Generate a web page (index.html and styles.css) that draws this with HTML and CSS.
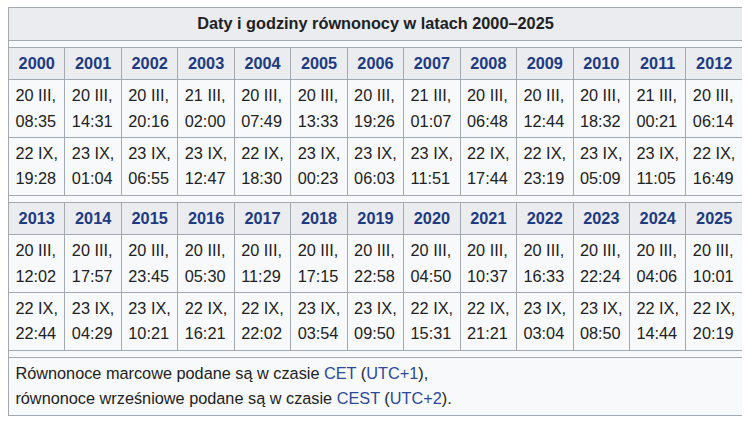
FILE: index.html
```html
<!DOCTYPE html>
<html lang="pl">
<head>
<meta charset="utf-8">
<title>Daty i godziny równonocy</title>
<link rel="stylesheet" href="styles.css">
</head>
<body>
<table class="wikitable">
<tbody>
<tr><th class="title" colspan="13">Daty i godziny równonocy w latach 2000–2025</th></tr>
<tr class="sep"><td colspan="13"></td></tr>
<tr class="years">
<th><a>2000</a></th><th><a>2001</a></th><th><a>2002</a></th><th><a>2003</a></th><th><a>2004</a></th><th><a>2005</a></th><th><a>2006</a></th><th><a>2007</a></th><th><a>2008</a></th><th><a>2009</a></th><th><a>2010</a></th><th><a>2011</a></th><th><a>2012</a></th>
</tr>
<tr>
<td>20 III,<br>08:35</td><td>20 III,<br>14:31</td><td>20 III,<br>20:16</td><td>21 III,<br>02:00</td><td>20 III,<br>07:49</td><td>20 III,<br>13:33</td><td>20 III,<br>19:26</td><td>21 III,<br>01:07</td><td>20 III,<br>06:48</td><td>20 III,<br>12:44</td><td>20 III,<br>18:32</td><td>21 III,<br>00:21</td><td>20 III,<br>06:14</td>
</tr>
<tr>
<td>22 IX,<br>19:28</td><td>23 IX,<br>01:04</td><td>23 IX,<br>06:55</td><td>23 IX,<br>12:47</td><td>22 IX,<br>18:30</td><td>23 IX,<br>00:23</td><td>23 IX,<br>06:03</td><td>23 IX,<br>11:51</td><td>22 IX,<br>17:44</td><td>22 IX,<br>23:19</td><td>23 IX,<br>05:09</td><td>23 IX,<br>11:05</td><td>22 IX,<br>16:49</td>
</tr>
<tr class="sep"><td colspan="13"></td></tr>
<tr class="years">
<th><a>2013</a></th><th><a>2014</a></th><th><a>2015</a></th><th><a>2016</a></th><th><a>2017</a></th><th><a>2018</a></th><th><a>2019</a></th><th><a>2020</a></th><th><a>2021</a></th><th><a>2022</a></th><th><a>2023</a></th><th><a>2024</a></th><th><a>2025</a></th>
</tr>
<tr>
<td>20 III,<br>12:02</td><td>20 III,<br>17:57</td><td>20 III,<br>23:45</td><td>20 III,<br>05:30</td><td>20 III,<br>11:29</td><td>20 III,<br>17:15</td><td>20 III,<br>22:58</td><td>20 III,<br>04:50</td><td>20 III,<br>10:37</td><td>20 III,<br>16:33</td><td>20 III,<br>22:24</td><td>20 III,<br>04:06</td><td>20 III,<br>10:01</td>
</tr>
<tr>
<td>22 IX,<br>22:44</td><td>23 IX,<br>04:29</td><td>23 IX,<br>10:21</td><td>22 IX,<br>16:21</td><td>22 IX,<br>22:02</td><td>23 IX,<br>03:54</td><td>23 IX,<br>09:50</td><td>22 IX,<br>15:31</td><td>22 IX,<br>21:21</td><td>23 IX,<br>03:04</td><td>23 IX,<br>08:50</td><td>22 IX,<br>14:44</td><td>22 IX,<br>20:19</td>
</tr>
<tr class="sep"><td colspan="13"></td></tr>
<tr>
<td class="note" colspan="13">Równonoce marcowe podane są w czasie <a>CET</a> (<a>UTC+1</a>),<br>równonoce wrześniowe podane są w czasie <a>CEST</a> (<a>UTC+2</a>).</td>
</tr>
</tbody>
</table>
</body>
</html>
```
FILE: styles.css
```css
body {
  margin: 7px 8px;
  background: #ffffff;
  font-family: "Liberation Sans", Arial, sans-serif;
  font-size: 16.3px;
  color: #202122;
}

.wikitable {
  width: 735px;
  table-layout: fixed;
  border-collapse: collapse;
  background: #f8f9fa;
  border: 1px solid #a2a9b1;
  line-height: 25.2px;
}

.wikitable th,
.wikitable td {
  border: 1px solid #a2a9b1;
  padding: 3.2px 6.4px;
  vertical-align: middle;
}

.wikitable th {
  background: #eaecf0;
  text-align: center;
  font-weight: bold;
}

.wikitable td {
  text-align: left;
}

.wikitable .sep td {
  padding: 0;
  height: 6px;
  line-height: 0;
  font-size: 0;
}

.years a {
  color: #1d3a82;
  text-decoration: none;
}

.note a {
  color: #2b4a9a;
  text-decoration: none;
}
```
